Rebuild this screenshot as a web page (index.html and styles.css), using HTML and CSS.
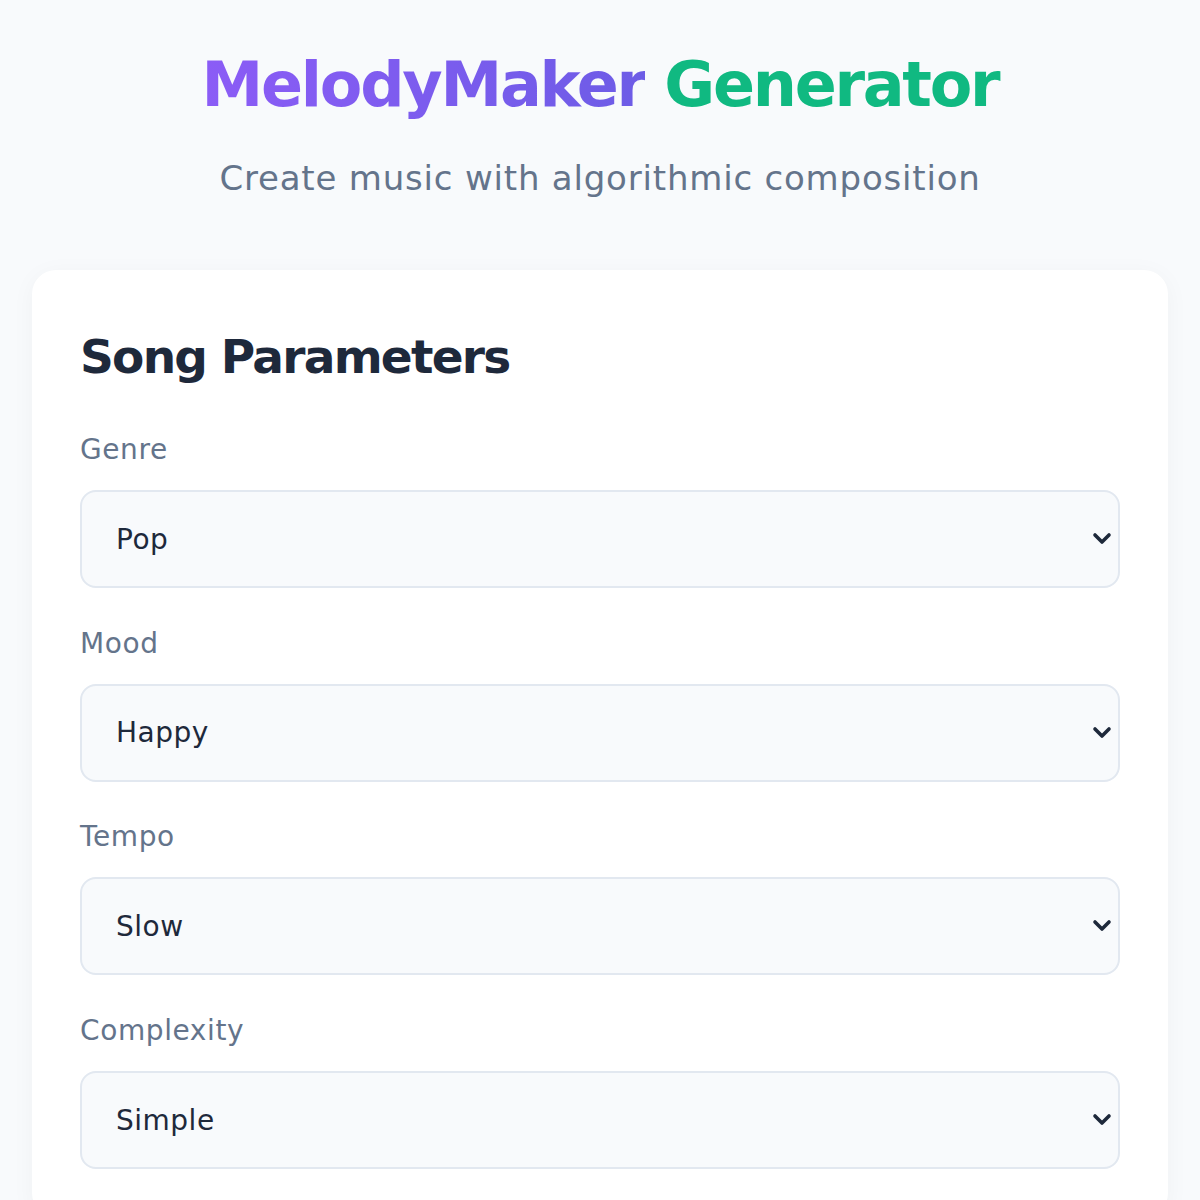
FILE: index.html
```html
<!DOCTYPE html>
<html lang="en">
<head>
<meta charset="utf-8">
<title>MelodyMaker Generator</title>
<link rel="stylesheet" href="styles.css">
</head>
<body>
<div class="page">
  <header class="header">
    <h1 class="title"><span class="brand">MelodyMaker</span> <span class="accent">Generator</span></h1>
    <p class="subtitle">Create music with algorithmic composition</p>
  </header>
  <section class="card">
    <h2 class="card-title">Song Parameters</h2>
    <div class="fields">
      <div class="field">
        <label class="label" for="genre">Genre</label>
        <div class="select-wrap">
          <select id="genre" class="select">
            <option>Pop</option><option>Rock</option><option>Jazz</option><option>Classical</option><option>Electronic</option>
          </select>
          <svg class="chevron" viewBox="0 0 20 14" width="20" height="14"><path d="M3 3l7 7 7-7" fill="none" stroke="#1e293b" stroke-width="3.6" stroke-linecap="round" stroke-linejoin="round"/></svg>
        </div>
      </div>
      <div class="field">
        <label class="label" for="mood">Mood</label>
        <div class="select-wrap">
          <select id="mood" class="select">
            <option>Happy</option><option>Sad</option><option>Energetic</option><option>Calm</option>
          </select>
          <svg class="chevron" viewBox="0 0 20 14" width="20" height="14"><path d="M3 3l7 7 7-7" fill="none" stroke="#1e293b" stroke-width="3.6" stroke-linecap="round" stroke-linejoin="round"/></svg>
        </div>
      </div>
      <div class="field">
        <label class="label" for="tempo">Tempo</label>
        <div class="select-wrap">
          <select id="tempo" class="select">
            <option>Slow</option><option>Medium</option><option>Fast</option>
          </select>
          <svg class="chevron" viewBox="0 0 20 14" width="20" height="14"><path d="M3 3l7 7 7-7" fill="none" stroke="#1e293b" stroke-width="3.6" stroke-linecap="round" stroke-linejoin="round"/></svg>
        </div>
      </div>
      <div class="field">
        <label class="label" for="complexity">Complexity</label>
        <div class="select-wrap">
          <select id="complexity" class="select">
            <option>Simple</option><option>Moderate</option><option>Complex</option>
          </select>
          <svg class="chevron" viewBox="0 0 20 14" width="20" height="14"><path d="M3 3l7 7 7-7" fill="none" stroke="#1e293b" stroke-width="3.6" stroke-linecap="round" stroke-linejoin="round"/></svg>
        </div>
      </div>
    </div>
  </section>
</div>
</body>
</html>
```

FILE: styles.css
```css
* { box-sizing: border-box; }

html, body {
  margin: 0;
  background: #f8fafc;
  font-family: "DejaVu Sans", "Noto Sans", sans-serif;
  color: #1e293b;
}

.page {
  padding: 46px 32px 32px;
}

.header {
  text-align: center;
  margin-bottom: 66px;
}

.title {
  margin: 0;
  font-size: 62px;
  line-height: 77px;
  font-weight: 700;
  letter-spacing: -2.25px;
}

.brand {
  background: linear-gradient(90deg, #8b5cf6, #6d5ce6);
  -webkit-background-clip: text;
  background-clip: text;
  color: transparent;
}

.accent {
  color: #10b981;
}

.subtitle {
  margin: 30px 0 0;
  font-size: 34px;
  line-height: 51px;
  color: #64748b;
  letter-spacing: 0.8px;
}

.card {
  background: #ffffff;
  border-radius: 24px;
  padding: 58px 48px 48px;
  box-shadow: 0 4px 24px rgba(15, 23, 42, 0.04);
}

.card-title {
  margin: 0 0 43px;
  font-size: 47px;
  line-height: 58px;
  font-weight: 700;
  letter-spacing: -1.75px;
  color: #1e293b;
}

.fields {
  display: flex;
  flex-direction: column;
  gap: 34.7px;
}

.field {
  display: flex;
  flex-direction: column;
  gap: 19px;
}

.label {
  font-size: 28px;
  line-height: 42px;
  color: #64748b;
  letter-spacing: 0.6px;
}

.select-wrap {
  position: relative;
}

.select {
  appearance: none;
  -webkit-appearance: none;
  width: 100%;
  height: 98px;
  padding: 0 60px 0 34px;
  font-family: inherit;
  font-size: 28px;
  color: #1e293b;
  background: #f8fafc;
  border: 2px solid #e2e8f0;
  border-radius: 16px;
  outline: none;
  letter-spacing: 0.5px;
}

.chevron {
  position: absolute;
  right: 8px;
  top: 50%;
  transform: translateY(-50%);
  pointer-events: none;
}
```
